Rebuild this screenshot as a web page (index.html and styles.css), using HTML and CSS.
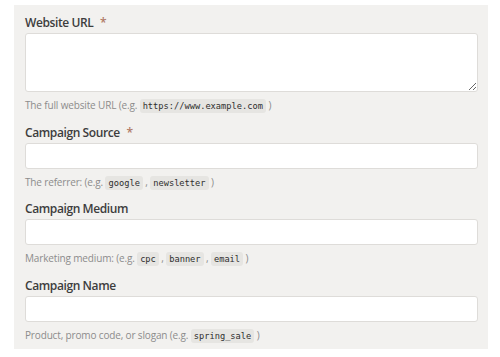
FILE: index.html
```html
<!DOCTYPE html>
<html lang="en">
<head>
  <meta charset="UTF-8" />
  <meta name="viewport" content="width=device-width, initial-scale=1.0"/>
  <title>Campaign URL Builder</title>
  <link rel="stylesheet" href="styles.css">
</head>
<body>

<form class="panel">
  <div class="field">
    <label class="field-label" for="url">Website URL <span class="required">*</span></label>
    <textarea id="url" class="field-input field-textarea"></textarea>
    <div class="field-help">The full website URL (e.g. <code>https://www.example.com</code> )</div>
  </div>

  <div class="field">
    <label class="field-label" for="source">Campaign Source <span class="required">*</span></label>
    <input id="source" class="field-input" type="text">
    <div class="field-help">The referrer: (e.g. <code>google</code> , <code>newsletter</code> )</div>
  </div>

  <div class="field">
    <label class="field-label" for="medium">Campaign Medium</label>
    <input id="medium" class="field-input" type="text">
    <div class="field-help">Marketing medium: (e.g. <code>cpc</code> , <code>banner</code> , <code>email</code> )</div>
  </div>

  <div class="field">
    <label class="field-label" for="name">Campaign Name</label>
    <input id="name" class="field-input" type="text">
    <div class="field-help">Product, promo code, or slogan (e.g. <code>spring_sale</code> )</div>
  </div>
</form>

</body>
</html>
```

FILE: styles.css
```css
:root {
  --panel-bg: #f2f1ef;
  --text: #3d3d3d;
  --muted: #8c8c8c;
  --accent: #b07a66;
  --border: #dedcd9;
  --code-bg: #e6e5e2;
}

body {
  margin: 0;
  background: #fff;
  font-family: "Open Sans", "Liberation Sans", sans-serif;
  color: var(--text);
}

.panel {
  width: 474px;
  height: 344px;
  margin: 5px 0 0 14px;
  padding: 9px 10px 0 11px;
  box-sizing: border-box;
  background: var(--panel-bg);
}

.field {
  margin-bottom: 10.5px;
}

.field-label {
  display: block;
  font-size: 12px;
  font-weight: 600;
  letter-spacing: -0.4px;
  line-height: 18px;
  margin-bottom: 1px;
}

.required {
  color: var(--accent);
  margin-left: 4px;
}

.field-input {
  display: block;
  width: 100%;
  height: 26px;
  margin: 0;
  box-sizing: border-box;
  background: #fff;
  border: 1px solid var(--border);
  border-radius: 3px;
  font: inherit;
  padding: 4px 8px;
}

.field-textarea {
  height: 59px;
  resize: vertical;
}

.field-help {
  margin-top: 5px;
  font-size: 10px;
  letter-spacing: -0.15px;
  line-height: 16px;
  height: 16px;
  color: var(--muted);
}

.field-help code {
  font-family: "DejaVu Sans Mono", "Liberation Mono", monospace;
  font-size: 8.7px;
  letter-spacing: 0;
  line-height: 1;
  color: #2e2e2e;
  background: var(--code-bg);
  border-radius: 3px;
  padding: 2px 3px;
}
```
